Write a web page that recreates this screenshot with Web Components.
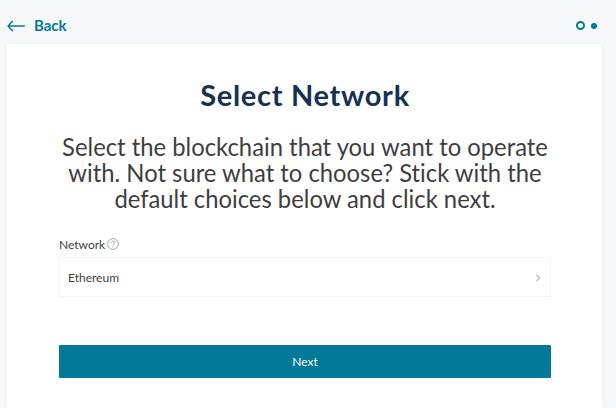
<!DOCTYPE html>
<html lang="en">
<head>
<meta charset="utf-8">
<title>Select Network</title>
<style>
  :root {
    --accent: #027998;
    --heading: #163253;
    --text: #3e3e3e;
    --page-bg: #f6f8fa;
    --line: #f4f4f4;
  }

  body {
    margin: 0;
    height: 408px;
    overflow: hidden;
    background: var(--page-bg);
    font-family: Lato, "Liberation Sans", sans-serif;
    color: var(--text);
  }
</style>
</head>
<body>
<setup-page>
  <back-link slot="back">Back</back-link>
  <step-dots slot="steps"></step-dots>
  <setup-card>
    <span slot="title">Select Network</span>
    <span slot="intro">Select the blockchain that you want to operate with. Not sure what to choose? Stick with the default choices below and click next.</span>
    <select-field label="Network">Ethereum</select-field>
    <primary-button>Next</primary-button>
  </setup-card>
</setup-page>

<script>
class BaseElement extends HTMLElement {
  connectedCallback () {
    this.attachShadow({ mode: 'open' })
    const template = document.createElement('template')
    template.innerHTML = this.getTemplateContent()
    this.shadowRoot.appendChild(template.content.cloneNode(true))
  }
}

class SetupPage extends BaseElement {
  getTemplateContent () {
    return `
    <style>
    :host {
        display: flex;
        flex-direction: column;
        height: 408px;
        padding: 0 14px 0 7px;
        box-sizing: border-box;
    }

    header {
        display: flex;
        justify-content: space-between;
        align-items: center;
        flex: none;
        height: 44px;
        padding: 7px 5px 0 0;
        box-sizing: border-box;
    }
    </style>

    <header><slot name="back"></slot><slot name="steps"></slot></header>
    <slot></slot>`
  }
}

class BackLink extends BaseElement {
  getTemplateContent () {
    return `
    <style>
    :host {
        display: flex;
        align-items: center;
        gap: 9px;
        color: var(--accent);
        font-size: 15px;
        font-weight: 700;
        line-height: 18px;
    }

    span {
        padding-bottom: 2px;
    }
    </style>

    <svg width="18" height="12" viewBox="0 0 18 12" fill="none" stroke="currentColor" stroke-width="1.4" stroke-linecap="round" stroke-linejoin="round">
      <path d="M17.3 6H1M5.5 1.3L1 6l4.5 4.7"/>
    </svg>
    <span><slot></slot></span>`
  }
}

class StepDots extends BaseElement {
  getTemplateContent () {
    return `
    <style>
    :host {
        display: flex;
        align-items: center;
        gap: 6px;
    }

    i {
        width: 6px;
        height: 6px;
        border-radius: 50%;
        background: var(--accent);
    }

    .current {
        width: 5px;
        height: 5px;
        border: 2px solid var(--accent);
        background: #fff;
    }
    </style>

    <i class="current"></i><i></i>`
  }
}

class SetupCard extends BaseElement {
  getTemplateContent () {
    return `
    <style>
    :host {
        display: flex;
        flex-direction: column;
        flex: 1;
        padding: 33px 51px 0 52px;
        background: #fff;
        border-radius: 3px 3px 0 0;
        box-shadow: 0 0 6px rgba(40, 60, 80, .05);
    }

    h1 {
        margin: 0;
        color: var(--heading);
        font-size: 29px;
        font-weight: 700;
        line-height: 35px;
        letter-spacing: .7px;
        text-align: center;
    }

    /* slightly condensed, so the measure is widened to match */
    p {
        margin: 21px -18px 25px;
        font-size: 25.5px;
        line-height: 26px;
        text-align: center;
        font-variant-ligatures: none;
        transform: scaleX(.934);
    }
    </style>

    <h1><slot name="title"></slot></h1>
    <p><slot name="intro"></slot></p>
    <slot></slot>`
  }
}

class SelectField extends BaseElement {
  getTemplateContent () {
    return `
    <style>
    :host {
        display: block;
        font-size: 12px;
        letter-spacing: 0;
    }

    .label {
        display: flex;
        align-items: center;
        gap: 2px;
        height: 16px;
        margin-bottom: 5px;
    }

    .box {
        display: flex;
        align-items: center;
        justify-content: space-between;
        height: 40px;
        padding: 1px 8px 0;
        border: 1px solid var(--line);
        box-sizing: border-box;
    }
    </style>

    <div class="label">
      <span>${this.getAttribute('label')}</span>
      <svg width="12" height="12" viewBox="0 0 12 12" fill="none" stroke="#8f8f8f" stroke-width=".8">
        <circle cx="6" cy="6" r="5.4"/>
        <path d="M4.4 4.7a1.6 1.6 0 1 1 2.4 1.4Q6 6.5 6 7.3M6 8.2v1"/>
      </svg>
    </div>
    <div class="box">
      <span><slot></slot></span>
      <svg width="8" height="8" viewBox="0 0 8 8" fill="none" stroke="#a9bfc9" stroke-width="1.4">
        <path d="M2.5 1L5.5 4 2.5 7"/>
      </svg>
    </div>`
  }
}

class PrimaryButton extends BaseElement {
  getTemplateContent () {
    return `
    <style>
    :host {
        display: block;
        margin-top: 48px;
    }

    button {
        display: block;
        width: 100%;
        height: 33px;
        padding: 0;
        border: 0;
        border-radius: 1px;
        background: var(--accent);
        color: #fff;
        font: 12px/33px Lato, "Liberation Sans", sans-serif;
    }
    </style>

    <button type="button"><slot></slot></button>`
  }
}

window.customElements.define('setup-page', SetupPage)
window.customElements.define('back-link', BackLink)
window.customElements.define('step-dots', StepDots)
window.customElements.define('setup-card', SetupCard)
window.customElements.define('select-field', SelectField)
window.customElements.define('primary-button', PrimaryButton)
</script>
</body>
</html>
